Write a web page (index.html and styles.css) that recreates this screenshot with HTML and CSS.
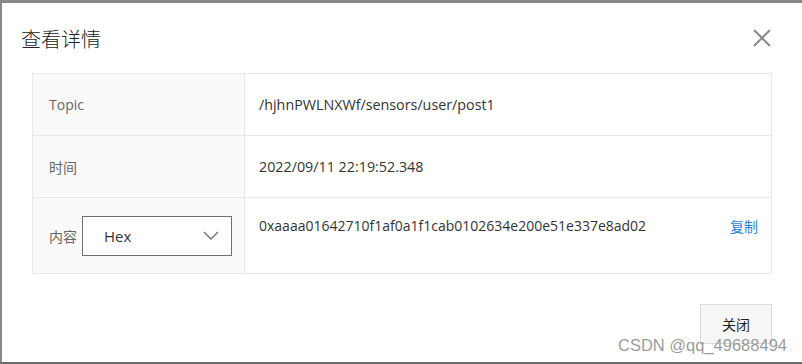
FILE: index.html
```html
<!DOCTYPE html>
<html lang="zh-CN">
<head>
  <meta charset="UTF-8">
  <title>查看详情</title>
  <link rel="stylesheet" href="styles.css">
</head>
<body>
  <div class="dialog">
    <!-- Header -->
    <div class="dialog-header">
      <span class="dialog-title">查看详情</span>
      <button class="close-btn" aria-label="关闭">
        <svg width="18" height="18" viewBox="0 0 18 18">
          <path d="M1 1 L17 17 M17 1 L1 17" stroke="#8a8a8a" stroke-width="2" fill="none"/>
        </svg>
      </button>
    </div>

    <!-- Detail table -->
    <div class="detail-table">
      <div class="detail-row">
        <div class="detail-label">Topic</div>
        <div class="detail-value">/hjhnPWLNXWf/sensors/user/post1</div>
      </div>
      <div class="detail-row">
        <div class="detail-label">时间</div>
        <div class="detail-value">2022/09/11 22:19:52.348</div>
      </div>
      <div class="detail-row content-row">
        <div class="detail-label">
          <span>内容</span>
          <div class="format-select">
            <span>Hex</span>
            <svg width="16" height="10" viewBox="0 0 16 10">
              <path d="M1 1 L8 8 L15 1" stroke="#777" stroke-width="1.5" fill="none"/>
            </svg>
          </div>
        </div>
        <div class="detail-value">
          <span class="payload">0xaaaa01642710f1af0a1f1cab0102634e200e51e337e8ad02</span>
          <a class="copy-link" href="#">复制</a>
        </div>
      </div>
    </div>

    <!-- Footer -->
    <div class="dialog-footer">
      <button class="btn">关闭</button>
    </div>

    <div class="watermark">CSDN @qq_49688494</div>
  </div>
  <div class="page-edge"></div>
</body>
</html>
```

FILE: styles.css
```css
:root {
  --overlay-bg: #888888;
  --border-color: #e8e8e8;
  --label-bg: #fafafa;
  --text-color: #333;
  --label-color: #666;
  --link-color: #1f7fd6;
}

body {
  margin: 0;
  background: var(--overlay-bg);
  font-family: "Open Sans", "Noto Sans CJK SC", sans-serif;
  font-size: 14px;
  color: var(--text-color);
  height: 364px;
  overflow: hidden;
}

.dialog {
  position: relative;
  margin: 3px 0 0 2px;
  height: 359px;
  background: #fff;
  box-sizing: border-box;
}

.dialog-header {
  height: 70px;
  display: flex;
  justify-content: space-between;
  align-items: flex-start;
  padding: 24px 31px 0 19px;
  box-sizing: border-box;
}

.dialog-title {
  font-family: "Noto Sans CJK SC", sans-serif;
  font-size: 20px;
  font-weight: 300;
  line-height: 24px;
  color: #222;
}

.close-btn {
  border: none;
  background: none;
  padding: 0;
  margin-top: 2px;
  width: 18px;
  height: 18px;
  cursor: pointer;
}

.close-btn svg {
  display: block;
}

/* Detail table */
.detail-table {
  margin: 0 30px;
  border: 1px solid var(--border-color);
}

.detail-row {
  display: flex;
  height: 61px;
  border-bottom: 1px solid var(--border-color);
}

.detail-row:last-child {
  border-bottom: none;
}

.content-row {
  height: 75px;
}

.detail-label {
  width: 212px;
  flex-shrink: 0;
  background: var(--label-bg);
  border-right: 1px solid var(--border-color);
  display: flex;
  align-items: center;
  padding-left: 16px;
  box-sizing: border-box;
  color: var(--label-color);
}

.detail-label span {
  font-family: "Noto Sans CJK SC", sans-serif;
}

.detail-value {
  flex: 1;
  display: flex;
  align-items: center;
  padding: 0 13px 0 14px;
  font-size: 14.3px;
}

.content-row .detail-label {
  padding-top: 1px;
}

.content-row .detail-value {
  align-items: flex-start;
  padding-top: 18px;
  justify-content: space-between;
  font-size: 14px;
}

.format-select {
  margin-left: 5px;
  width: 150px;
  height: 40px;
  box-sizing: border-box;
  border: 1px solid #707070;
  background: #fff;
  display: flex;
  align-items: center;
  justify-content: space-between;
  padding: 0 12px 0 21px;
  color: var(--text-color);
}

.format-select span {
  font-family: "Open Sans", sans-serif;
  font-size: 15px;
}

.format-select svg {
  display: block;
}

.copy-link {
  font-family: "Noto Sans CJK SC", sans-serif;
  color: var(--link-color);
  text-decoration: none;
}

/* Footer */
.dialog-footer {
  display: flex;
  justify-content: flex-end;
  padding: 30px 30px 0 0;
}

.btn {
  width: 72px;
  height: 40px;
  border: 1px solid #dcdcdc;
  background: #f7f7f7;
  font-family: "Noto Sans CJK SC", sans-serif;
  font-size: 14px;
  color: #222;
  cursor: pointer;
}

.watermark {
  position: absolute;
  right: 15px;
  top: 333px;
  font-family: "Liberation Sans", sans-serif;
  font-size: 16.5px;
  color: rgba(120, 120, 120, 0.75);
  pointer-events: none;
}

.page-edge {
  height: 2px;
  background: #6a6a6a;
}
```
